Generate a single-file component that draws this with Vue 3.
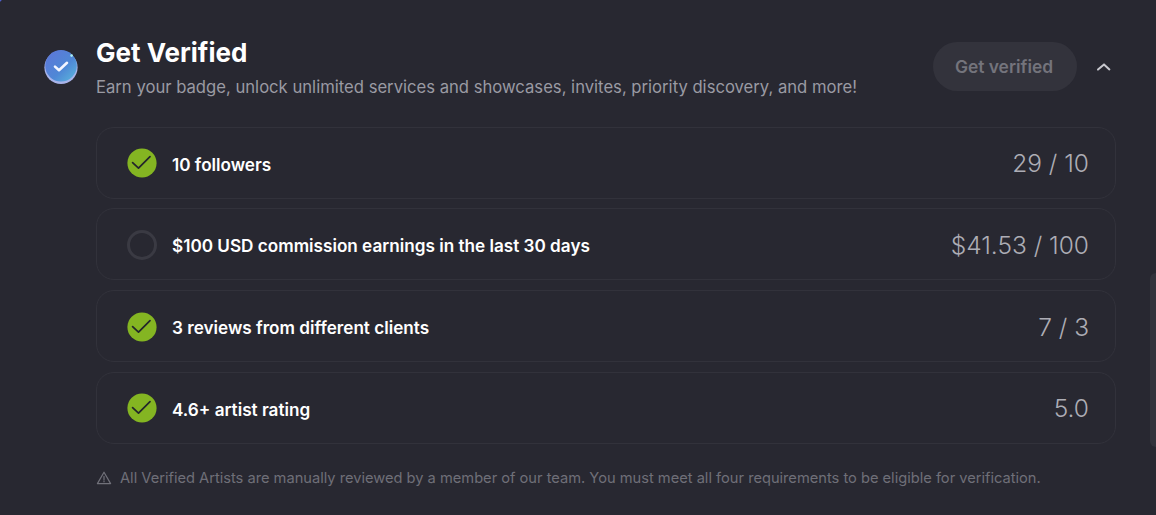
<template>
  <div class="page">
    <span class="corner"></span>
    <span class="scroll-thumb"></span>
    <div class="panel">
      <div class="badge">
        <svg width="36" height="36" viewBox="0 0 36 36">
          <defs>
            <linearGradient id="badgeFill" x1="0.1" y1="0.1" x2="0.9" y2="0.9">
              <stop offset="0" stop-color="#5c78d8" />
              <stop offset="0.6" stop-color="#4f88d6" />
              <stop offset="1" stop-color="#58aedb" />
            </linearGradient>
          </defs>
          <circle cx="18" cy="18.4" r="16.6" fill="#a9b4ea" />
          <circle cx="18" cy="16.8" r="15.8" fill="url(#badgeFill)" />
          <circle cx="28.6" cy="6.6" r="1.3" fill="#a8ecf2" />
          <path d="M12 17.6l4 3.6 8-7.4" fill="none" stroke="#f4f6ff" stroke-width="2.6" stroke-linecap="round" stroke-linejoin="round" />
        </svg>
      </div>
      <div class="main">
        <div class="head">
          <div class="head-text">
            <h2 class="title">Get Verified</h2>
            <p class="subtitle">Earn your badge, unlock unlimited services and showcases, invites, priority discovery, and more!</p>
          </div>
          <button class="verify-btn" disabled>Get verified</button>
          <svg class="chevron" width="16" height="16" viewBox="0 0 16 16">
            <path d="M2 10.6L8 5.4l5.4 5" fill="none" stroke="#c8c8ce" stroke-width="2" stroke-linecap="round" stroke-linejoin="round" />
          </svg>
        </div>
        <div class="rows">
          <div v-for="row in rows" :key="row.label" class="row">
            <svg v-if="row.done" class="state" width="30" height="30" viewBox="0 0 30 30">
              <circle cx="15" cy="15" r="14.6" fill="#84b522" />
              <path d="M5.6 14.6l5.9 5.6L23 8.6" fill="none" stroke="#23262b" stroke-width="1.7" stroke-linecap="round" stroke-linejoin="round" />
            </svg>
            <span v-else class="state empty"></span>
            <span class="label">{{ row.label }}</span>
            <span class="value">{{ row.value }}</span>
          </div>
        </div>
        <p class="note">
          <svg width="16" height="16" viewBox="0 0 16 16">
            <path d="M8 2.2L14.6 13.6H1.4z" fill="none" stroke="#71717a" stroke-width="1.2" stroke-linejoin="round" />
            <path d="M8 6.4v3.4M8 11.2v.6" fill="none" stroke="#71717a" stroke-width="1.2" stroke-linecap="round" />
          </svg>
          All Verified Artists are manually reviewed by a member of our team. You must meet all four requirements to be eligible for verification.
        </p>
      </div>
    </div>
  </div>
</template>

<script setup>
const rows = [
  { label: '10 followers', value: '29 / 10', done: true },
  { label: '$100 USD commission earnings in the last 30 days', value: '$41.53 / 100', done: false },
  { label: '3 reviews from different clients', value: '7 / 3', done: true },
  { label: '4.6+ artist rating', value: '5.0', done: true }
]
</script>

<style>
html, body {
  margin: 0;
  background: #282831;
}
</style>

<style scoped>
.page {
  position: relative;
  width: 1156px;
  height: 515px;
  overflow: hidden;
  background: #282831;
  font-family: Inter, "Noto Sans", sans-serif;
}

.corner {
  position: absolute;
  left: -6px;
  top: -6px;
  width: 8px;
  height: 8px;
  border-radius: 50%;
  background: #4f5fd0;
}

.scroll-thumb {
  position: absolute;
  right: -6px;
  top: 273px;
  width: 12px;
  height: 174px;
  border-radius: 6px;
  background: #33333c;
}

.panel {
  display: flex;
  padding: 34px 40px 0 43px;
}

.badge {
  width: 36px;
  height: 36px;
  margin-top: 15px;
  margin-right: 17px;
  flex-shrink: 0;
}

.main {
  flex: 1;
  min-width: 0;
}

.head {
  display: flex;
  align-items: center;
  height: 65px;
}

.head-text {
  flex: 1;
  padding-top: 3px;
}

.title {
  margin: 0;
  font-size: 26px;
  line-height: 30px;
  font-weight: 700;
  color: #fff;
}

.subtitle {
  margin: 8px 0 0;
  font-size: 16.65px;
  line-height: 22px;
  color: #9a9aa3;
}

.verify-btn {
  width: 144px;
  height: 49px;
  padding: 0 2px 0 0;
  margin-right: 19px;
  border: none;
  border-radius: 25px;
  background: #33333c;
  color: #74747c;
  font-family: inherit;
  font-size: 17.4px;
  font-weight: 600;
}

.chevron {
  margin-right: 4px;
}

.rows {
  display: flex;
  flex-direction: column;
  gap: 9.67px;
  margin-top: 27.7px;
}

.row {
  display: flex;
  align-items: center;
  height: 72px;
  box-sizing: border-box;
  padding: 1px 26px 0 30px;
  border: 1px solid #32323b;
  border-radius: 18px;
}

.state {
  width: 30px;
  height: 30px;
  flex-shrink: 0;
  margin-right: 15px;
}

.empty {
  box-sizing: border-box;
  border: 3px solid #3a3a43;
  border-radius: 50%;
}

.label {
  flex: 1;
  padding-top: 2px;
  font-size: 17.15px;
  font-weight: 600;
  color: #fff;
}

.value {
  font-size: 24.5px;
  font-weight: 300;
  color: #adadb5;
}

.note {
  display: flex;
  align-items: center;
  gap: 8px;
  margin: 24px 0 0;
  font-size: 14.65px;
  line-height: 20px;
  color: #6f6f78;
}
</style>
